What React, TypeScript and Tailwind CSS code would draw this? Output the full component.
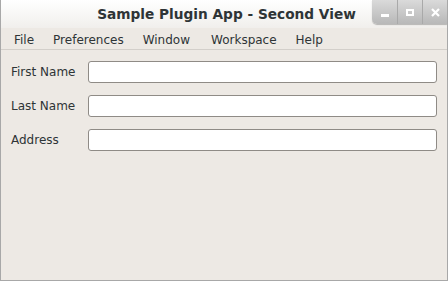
import React from 'react';

const menus = [
  { label: 'File', ml: 'ml-0' },
  { label: 'Preferences', ml: 'ml-[19px]' },
  { label: 'Window', ml: 'ml-[19px]' },
  { label: 'Workspace', ml: 'ml-[21px]' },
  { label: 'Help', ml: 'ml-[19px]' },
];
const fields = ['First Name', 'Last Name', 'Address'];

function WinButton({ children, first }: { children: React.ReactNode; first?: boolean }) {
  return (
    <div
      className={`w-[25px] h-[24px] flex items-center justify-center bg-gradient-to-b from-[#dadada] to-[#b8b8b8] ${
        first ? 'rounded-bl-[5px]' : 'border-l border-[#a9a9a9]'
      }`}
    >
      {children}
    </div>
  );
}

export default function App() {
  return (
    <div
      className="w-[448px] h-[281px] flex flex-col bg-[#ede9e4] border-l border-r border-b border-[#a8a8a8] overflow-hidden"
      style={{ fontFamily: '"DejaVu Sans", sans-serif' }}
    >
      <div className="h-[28px] flex items-start bg-gradient-to-b from-[#ffffff] to-[#f1efec]">
        <div className="flex-1 text-center pt-[4px] pl-[80px] text-[13.7px] font-bold text-[#2e3436]">
          Sample Plugin App - Second View
        </div>
        <div className="flex shadow-[0_1px_1px_rgba(0,0,0,0.25)] rounded-bl-[5px]">
          <WinButton first>
            <div className="w-[8px] h-[3px] bg-white mt-[6px]" />
          </WinButton>
          <WinButton>
            <div className="w-[8px] h-[7px] border-2 border-white" />
          </WinButton>
          <WinButton>
            <svg width="9" height="9" viewBox="0 0 9 9">
              <path d="M1 1L8 8M8 1L1 8" stroke="white" strokeWidth="2.2" />
            </svg>
          </WinButton>
        </div>
      </div>
      <div className="h-[22px] flex items-center pl-[13px] pt-[2px] text-[12px] text-[#2e3436] border-b border-[#d3cfca] bg-[#ede9e4]">
        {menus.map((m) => (
          <span key={m.label} className={m.ml}>
            {m.label}
          </span>
        ))}
      </div>
      <div className="flex flex-col gap-[12px] pt-[11px] pl-[10px] pr-[10px]">
        {fields.map((f) => (
          <div key={f} className="flex items-center">
            <span className="w-[77px] text-[12px] text-[#2e3436]">{f}</span>
            <div className="flex-1 h-[22px] bg-white border border-[#8f8b86] rounded-[3px]" />
          </div>
        ))}
      </div>
    </div>
  );
}
